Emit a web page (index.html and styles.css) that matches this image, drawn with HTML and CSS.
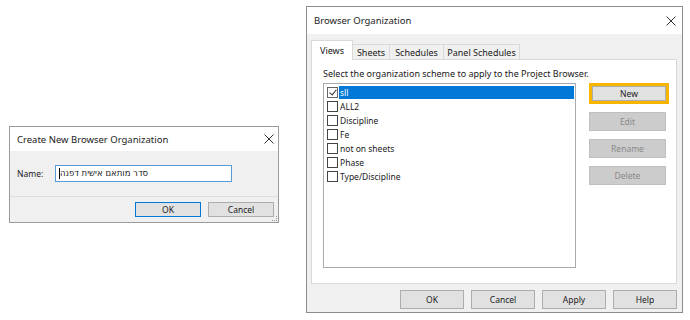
FILE: index.html
```html
<!DOCTYPE html>
<html lang="en">
<head>
    <meta charset="UTF-8">
    <title>Browser Organization</title>
    <link rel="stylesheet" href="styles.css">
</head>
<body>

<div class="screen">
    <!-- Dialog kecil: nama organisasi baru -->
    <div class="dialog small">
        <div class="titlebar">
            <span class="title">Create New Browser Organization</span>
            <svg class="close" width="10" height="10" viewBox="0 0 10 10"><path d="M0.5 0.5 L9.5 9.5 M9.5 0.5 L0.5 9.5" stroke="#333" stroke-width="1" fill="none"/></svg>
        </div>
        <div class="small-body">
            <span class="label">Name:</span>
            <div class="textbox">
                <span class="caret"></span><span class="value">סדר מותאם אישית דפנה</span>
            </div>
        </div>
        <div class="small-footer">
            <button class="btn default">OK</button>
            <button class="btn">Cancel</button>
            <span class="grip"></span>
        </div>
    </div>

    <!-- Dialog utama -->
    <div class="dialog big">
        <div class="titlebar tall">
            <span class="title">Browser Organization</span>
            <svg class="close" width="10" height="10" viewBox="0 0 10 10"><path d="M0.5 0.5 L9.5 9.5 M9.5 0.5 L0.5 9.5" stroke="#333" stroke-width="1" fill="none"/></svg>
        </div>
        <div class="big-body">
            <div class="tabs">
                <span class="tab active">Views</span>
                <span class="tab t-sheets">Sheets</span>
                <span class="tab t-sched">Schedules</span>
                <span class="tab t-panel">Panel Schedules</span>
            </div>
            <div class="panel">
                <p class="hint">Select the organization scheme to apply to the Project Browser.</p>
                <div class="panel-row">
                    <ul class="list">
                        <li class="selected"><span class="check on"></span><span class="name">sll</span></li>
                        <li><span class="check"></span><span class="name">ALL2</span></li>
                        <li><span class="check"></span><span class="name">Discipline</span></li>
                        <li><span class="check"></span><span class="name">Fe</span></li>
                        <li><span class="check"></span><span class="name">not on sheets</span></li>
                        <li><span class="check"></span><span class="name">Phase</span></li>
                        <li><span class="check"></span><span class="name">Type/Discipline</span></li>
                    </ul>
                    <div class="side">
                        <div class="focus-ring"><button class="btn">New</button></div>
                        <button class="btn wide disabled">Edit</button>
                        <button class="btn wide disabled">Rename</button>
                        <button class="btn wide disabled">Delete</button>
                    </div>
                </div>
            </div>
            <div class="footer">
                <button class="btn big-btn">OK</button>
                <button class="btn big-btn">Cancel</button>
                <button class="btn big-btn">Apply</button>
                <button class="btn big-btn">Help</button>
            </div>
        </div>
    </div>
</div>

</body>
</html>
```

FILE: styles.css
```css
/* Reset dan dasar */
* {
    margin: 0;
    padding: 0;
    box-sizing: border-box;
}

body {
    font-family: "Noto Sans", "Open Sans", sans-serif;
    font-size: 8.5px;
    color: #1a1a1a;
    background-color: #ffffff;
    width: 690px;
    height: 320px;
    overflow: hidden;
}

.screen {
    display: flex;
    align-items: flex-start;
    gap: 27px;
    padding: 6px 0 0 9px;
}

.dialog {
    border: 1px solid #9a9a9a;
    background-color: #f0f0f0;
    display: flex;
    flex-direction: column;
}

.small {
    width: 270px;
    height: 97px;
    margin-top: 120px;
}

.big {
    width: 377px;
    height: 307px;
    border-color: #8c8c8c;
}

.titlebar {
    background-color: #ffffff;
    height: 24px;
    display: flex;
    align-items: center;
    justify-content: space-between;
    padding: 0 4px 0 7px;
}

.titlebar.tall {
    height: 27px;
    padding-right: 6px;
}

.title {
    font-size: 9.5px;
    color: #222;
}

/* Dialog kecil */
.small-body {
    height: 46px;
    display: flex;
    align-items: center;
    padding: 0 0 1px 7px;
    border-bottom: 1px solid #dcdcdc;
}

.label {
    width: 38px;
}

.textbox {
    width: 177px;
    height: 17px;
    background-color: #fff;
    border: 1px solid #5b9bd5;
    display: flex;
    align-items: center;
    padding-left: 3px;
}

.caret {
    width: 1px;
    height: 11px;
    background-color: #000;
}

.value {
    font-family: "DejaVu Sans", "Noto Sans", sans-serif;
    font-size: 8.5px;
}

.small-footer {
    flex: 1;
    display: flex;
    align-items: center;
    gap: 7px;
    padding-left: 125px;
    position: relative;
}

.grip {
    position: absolute;
    right: 1px;
    bottom: 1px;
    width: 5px;
    height: 5px;
    border-right: 1px dotted #999;
    border-bottom: 1px dotted #999;
}

.btn {
    font-family: inherit;
    font-size: 8.5px;
    color: #1a1a1a;
    background-color: #e1e1e1;
    border: 1px solid #adadad;
    width: 66px;
    height: 15px;
}

.btn.default {
    border-color: #0078d7;
}

/* Dialog utama */
.big-body {
    flex: 1;
    padding: 6px 5px 0 4px;
    display: flex;
    flex-direction: column;
}

.tabs {
    display: flex;
    align-items: flex-end;
    height: 19px;
    padding-left: 1px;
}

.tab {
    height: 15px;
    border: 1px solid #d9d9d9;
    border-bottom: none;
    margin-left: -1px;
    display: flex;
    align-items: center;
    justify-content: center;
    background-color: #f0f0f0;
    font-size: 9px;
}

.tab.active {
    width: 42px;
    height: 20px;
    background-color: #fff;
    margin-bottom: -1px;
    position: relative;
    z-index: 1;
    align-items: flex-start;
    padding-top: 3px;
}

.t-sheets {
    width: 38px;
}

.t-sched {
    width: 55px;
}

.t-panel {
    width: 77px;
}

.panel {
    background-color: #fff;
    border: 1px solid #d9d9d9;
    height: 225px;
    padding: 8px 0 0 11px;
}

.hint {
    height: 15px;
    line-height: 12px;
    font-size: 9px;
}

.panel-row {
    display: flex;
    gap: 13px;
}

.list {
    list-style: none;
    width: 253px;
    height: 185px;
    border: 1px solid #a9abb0;
    padding: 1px 0 0 3px;
}

.list li {
    display: flex;
    align-items: center;
    height: 14px;
}

.check {
    width: 11px;
    height: 11px;
    border: 1px solid #444;
    background-color: #fff;
    margin-right: 1px;
    position: relative;
}

.check.on {
    border-color: #666;
}

.check.on::after {
    content: "";
    position: absolute;
    left: 3px;
    top: 0;
    width: 3px;
    height: 6px;
    border-right: 1px solid #333;
    border-bottom: 1px solid #333;
    transform: rotate(40deg);
}

.name {
    flex: 1;
    height: 13px;
    line-height: 13px;
    padding-left: 1px;
}

.selected .name {
    background-color: #0078d7;
    color: #fff;
    margin-right: 1px;
}

.side {
    display: flex;
    flex-direction: column;
    gap: 8px;
    margin-top: 0;
}

.focus-ring {
    border: 3px solid #f7b500;
    width: 80px;
    height: 21px;
    margin-bottom: 0;
}

.focus-ring .btn {
    width: 74px;
    height: 15px;
}

.btn.wide {
    width: 77px;
    height: 19px;
}

.btn.disabled {
    background-color: #cccccc;
    border-color: #bfbfbf;
    color: #8a8a8a;
}

.footer {
    display: flex;
    justify-content: flex-end;
    gap: 7px;
    padding: 6px 0 0 0;
}

.btn.big-btn {
    width: 64px;
    height: 19px;
}
```
